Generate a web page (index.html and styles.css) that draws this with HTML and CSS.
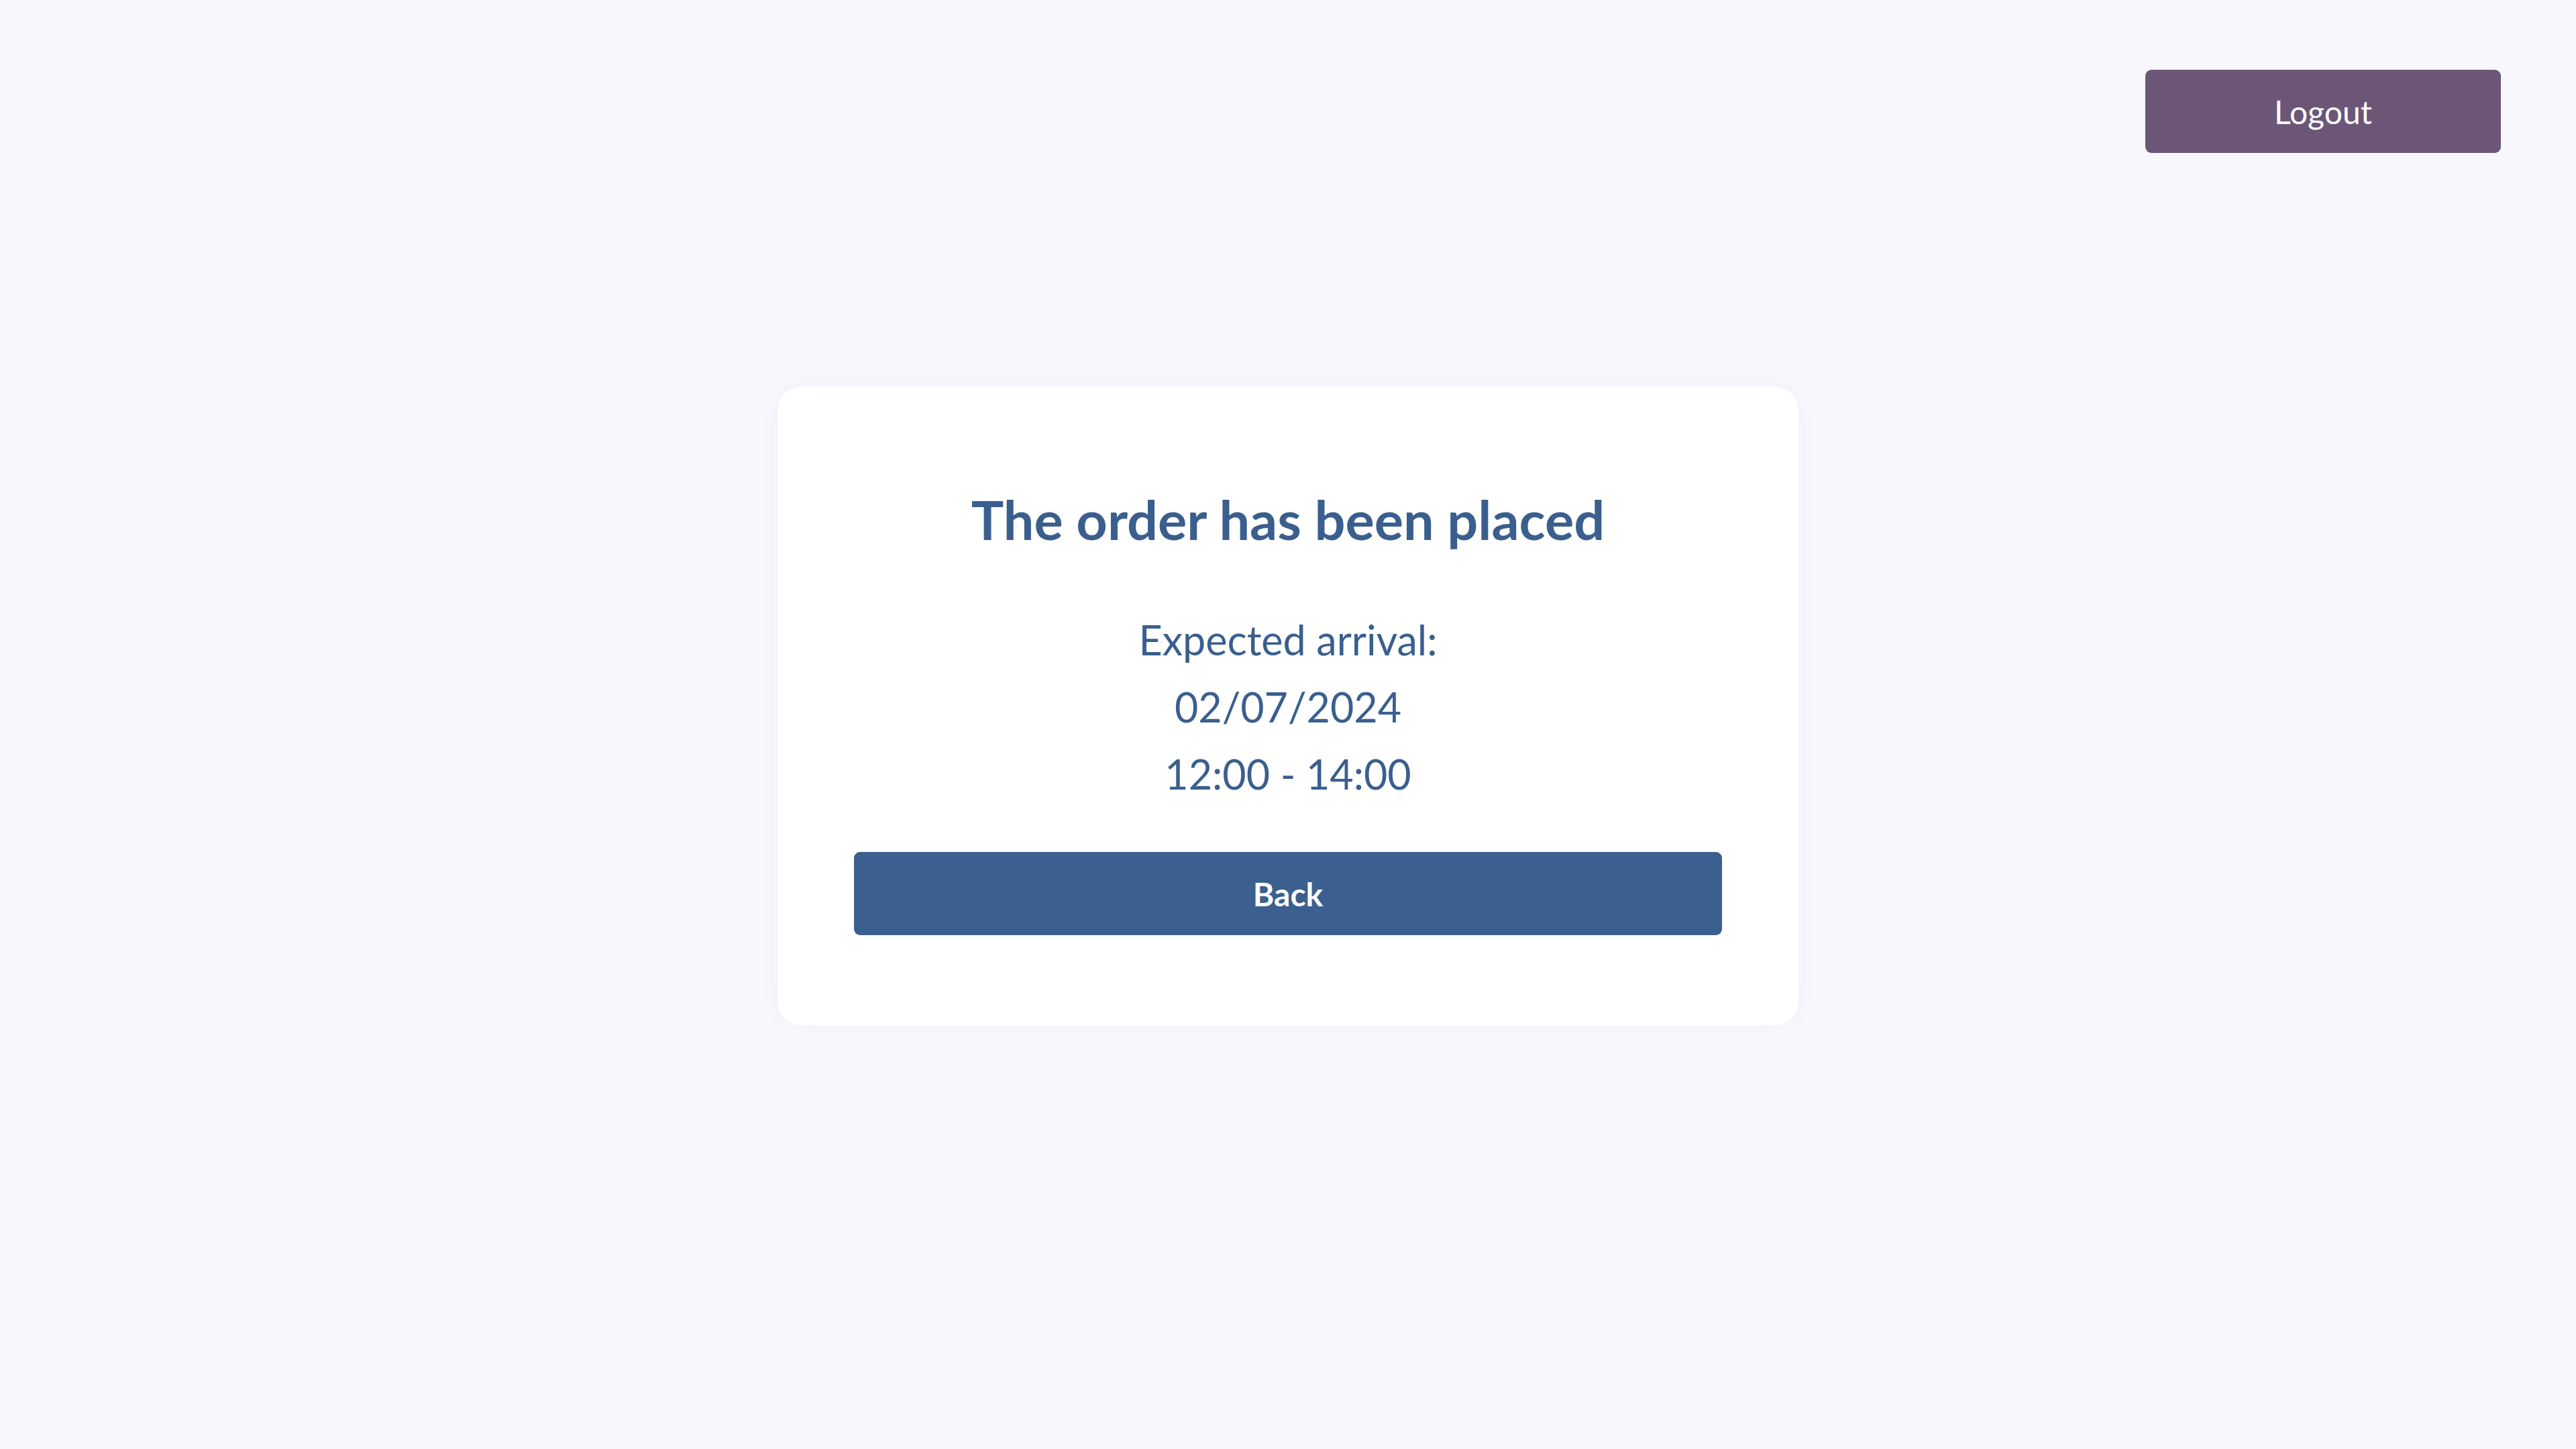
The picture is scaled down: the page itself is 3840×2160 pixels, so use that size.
FILE: index.html
```html
<!DOCTYPE html>
<html lang="en">
<head>
<meta charset="utf-8">
<title>Order placed</title>
<link rel="stylesheet" href="styles.css">
</head>
<body>
<header class="topbar">
  <button class="btn btn-logout" type="button">Logout</button>
</header>
<main class="main">
  <section class="card">
    <h1 class="card-title">The order has been placed</h1>
    <div class="arrival">
      <p class="arrival-line">Expected arrival:</p>
      <p class="arrival-line">02/07/2024</p>
      <p class="arrival-line">12:00 - 14:00</p>
    </div>
    <button class="btn btn-back" type="button">Back</button>
  </section>
</main>
</body>
</html>
```

FILE: styles.css
```css
html, body {
  margin: 0;
  padding: 0;
}

body {
  min-height: 100vh;
  background: #f7f8fd;
  font-family: Lato, "Open Sans", "Liberation Sans", sans-serif;
  color: #3a5f8e;
}

.topbar {
  display: flex;
  justify-content: flex-end;
  padding: 104px 112px 0 0;
}

.btn {
  border: none;
  font-family: inherit;
  color: #ffffff;
  cursor: pointer;
  display: flex;
  align-items: center;
  justify-content: center;
}

.btn-logout {
  width: 530px;
  height: 124px;
  border-radius: 9px;
  background: #6b5678;
  font-size: 48px;
  font-weight: 400;
}

.main {
  display: flex;
  justify-content: center;
  padding-top: 348px;
}

.card {
  box-sizing: border-box;
  width: 1522px;
  padding: 149px 114px 135px;
  background: #ffffff;
  border-radius: 37px;
  box-shadow: 0 0 24px rgba(120, 130, 200, 0.06);
  display: flex;
  flex-direction: column;
  align-items: stretch;
  text-align: center;
}

.card-title {
  margin: 0;
  font-size: 81px;
  font-weight: 700;
  line-height: 1.2;
  color: #3a5f8e;
}

.arrival {
  margin-top: 82px;
}

.arrival-line {
  margin: 0;
  font-size: 61px;
  line-height: 100px;
  font-weight: 400;
  color: #3a5f8e;
}

.btn-back {
  margin-top: 66px;
  height: 124px;
  border-radius: 9px;
  background: #3b608f;
  font-size: 48px;
  font-weight: 700;
}
```
